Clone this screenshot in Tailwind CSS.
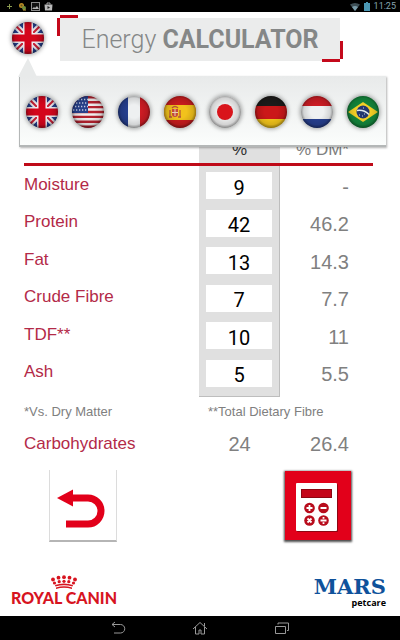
<!DOCTYPE html>
<html lang="en">
<head>
    <meta charset="UTF-8">
    <meta name="viewport" content="width=device-width, initial-scale=1.0">
    <title>Energy Calculator</title>
    <script src="https://cdn.jsdelivr.net/npm/@tailwindcss/browser@4"></script>
</head>
<body class="flex min-h-screen flex-col bg-white font-['Liberation_Sans',sans-serif]">
    <!-- shared flag drawings; size-0 because gradients do not paint from a display:none svg -->
    <svg class="absolute size-0" aria-hidden="true">
        <defs>
            <radialGradient id="shine" cx="50%" cy="48%" r="52%">
                <stop offset="40%" stop-color="#000" stop-opacity="0"/>
                <stop offset="80%" stop-color="#000" stop-opacity=".12"/>
                <stop offset="100%" stop-color="#000" stop-opacity=".45"/>
            </radialGradient>
            <symbol id="uk" viewBox="0 0 32 32">
                <rect width="32" height="32" fill="#26418f"/>
                <path d="M0 0L32 32M32 0L0 32" stroke="#f1eef2" stroke-width="6"/>
                <path d="M0 0L32 32M32 0L0 32" stroke="#cf2036" stroke-width="2"/>
                <path d="M16 0V32M0 16H32" stroke="#f1eef2" stroke-width="10"/>
                <path d="M16 0V32M0 16H32" stroke="#d4061c" stroke-width="7"/>
                <rect width="32" height="32" fill="url(#shine)"/>
            </symbol>
            <symbol id="us" viewBox="0 0 32 32">
                <rect width="32" height="32" fill="#f0eeee"/>
                <path d="M0 1.300H32M0 6.200H32M0 11.100H32M0 16H32M0 20.900H32M0 25.800H32M0 30.700H32" stroke="#b5222f" stroke-width="2.400"/>
                <rect width="16" height="17" fill="#27408b"/>
                <path d="M3 3.500H16M1 7H16M3 10.500H16M1 14H16" stroke="#c5cde6" stroke-width="1.300" stroke-dasharray="1.300 1.700"/>
                <rect width="32" height="32" fill="url(#shine)"/>
            </symbol>
            <symbol id="fr" viewBox="0 0 32 32">
                <rect width="32" height="32" fill="#eef0f1"/>
                <rect width="10" height="32" fill="#263f8f"/>
                <rect x="22" width="10" height="32" fill="#cf1c24"/>
                <rect width="32" height="32" fill="url(#shine)"/>
            </symbol>
            <symbol id="es" viewBox="0 0 32 32">
                <rect width="32" height="32" fill="#c91c1e"/>
                <rect y="9" width="32" height="15" fill="#f2c21c"/>
                <path d="M8 13h6v5q0 3-3 3t-3-3z" fill="#c4483d"/>
                <path d="M6 14v7M16 14v7M5 21h3M14 21h3M8 12q3-3 6 0" fill="none" stroke="#b4533c" stroke-width="1.300"/>
                <path d="M11 13v7M8 16.500h6" stroke="#e9cfb2"/>
                <rect width="32" height="32" fill="url(#shine)"/>
            </symbol>
            <symbol id="jp" viewBox="0 0 32 32">
                <rect width="32" height="32" fill="#efefef"/>
                <circle cx="16" cy="16" r="8" fill="#d9141b"/>
                <rect width="32" height="32" fill="url(#shine)"/>
            </symbol>
            <symbol id="de" viewBox="0 0 32 32">
                <rect width="32" height="11" fill="#1d1b1a"/>
                <rect y="10" width="32" height="13" fill="#cb1719"/>
                <rect y="23" width="32" height="9" fill="#f3c51c"/>
                <rect width="32" height="32" fill="url(#shine)"/>
            </symbol>
            <symbol id="nl" viewBox="0 0 32 32">
                <rect width="32" height="32" fill="#eef0f1"/>
                <rect width="32" height="10" fill="#cb1c24"/>
                <rect y="23" width="32" height="9" fill="#263f8f"/>
                <rect width="32" height="32" fill="url(#shine)"/>
            </symbol>
            <symbol id="br" viewBox="0 0 32 32">
                <rect width="32" height="32" fill="#13873c"/>
                <path d="M1 16L16 6L31 16L16 26z" fill="#f5d126"/>
                <circle cx="16" cy="16" r="6.500" fill="#22366f"/>
                <path d="M10 14.500q7-1 12 4" fill="none" stroke="#dfe7ee" stroke-width="1.500"/>
                <path d="M12 19h1M15 20h1M17 18h1M16 12h1" stroke="#c6d0e4"/>
                <rect width="32" height="32" fill="url(#shine)"/>
            </symbol>
        </defs>
    </svg>

    <!-- status bar -->
    <div class="flex h-3 items-center justify-between bg-black px-1">
        <div class="flex items-center gap-1 pl-px">
            <svg class="size-[9px]" viewBox="0 0 9 9"><path d="M4.500 2v5M2 4.500h5" stroke="#8a9a50"/></svg>
            <svg class="size-[9px]" viewBox="0 0 9 9"><circle cx="3.500" cy="3.500" r="2.500" fill="#b98b25"/><circle cx="6" cy="6" r="2" fill="#6d8f3d"/><circle cx="3.500" cy="3.500" r="1" fill="#5d5520"/><path d="M5 8h3" stroke="#c9a13a"/></svg>
            <svg class="size-[9px]" viewBox="0 0 9 9"><rect x=".5" y=".5" width="8" height="8" fill="#111" stroke="#8b8b8b"/><path d="M1 7l2-2 1 1 2-2 2 3z" fill="#b5b5b5"/></svg>
            <svg class="size-[9px]" viewBox="0 0 9 9"><path d="M3 2.500V1h3v1.500" fill="none" stroke="#aaa"/><path d="M.5 2.500h8l-.5 6H1z" fill="#b9b9b9"/><path d="M3.500 4v3l2.500-1.500z" fill="#222"/></svg>
        </div>
        <div class="flex items-center gap-1">
            <svg class="h-[9px] w-[10px]" viewBox="0 0 10 9"><path d="M0 2.500Q5-.5 10 2.500L5 9z" fill="#3e4f56"/><path d="M2 5q3-2 6 0L5 9z" fill="#7a9ba8"/></svg>
            <svg class="h-[9px] w-[6px]" viewBox="0 0 6 9"><path d="M2 0h2v1h2v8H0V1h2z" fill="#4b97b3"/></svg>
            <span class="font-[Roboto,sans-serif] text-[9px] leading-3 text-[#86a5b0]">11:25</span>
        </div>
    </div>

    <div class="relative flex flex-1 flex-col">
        <header class="flex items-start gap-4 pt-[6px] pr-15 pl-3">
            <button type="button" class="mt-1 size-8 shrink-0 overflow-hidden rounded-full shadow-[0_0_4px_1px_rgba(0,0,0,0.35)]" aria-label="Language: English" aria-expanded="true" onclick="toggleLanguages(this)">
                <svg class="size-8"><use href="#uk"/></svg>
            </button>
            <div class="relative flex h-[43px] flex-1 items-center justify-center bg-[#ebecec]">
                <span class="absolute -top-[3px] left-0 h-[3px] w-[18px] bg-[#c4091b]"></span>
                <span class="absolute top-0 -left-[3px] h-[18px] w-[3px] bg-[#c4091b]"></span>
                <span class="absolute right-0 -bottom-px h-[3px] w-[18px] bg-[#c4091b]"></span>
                <span class="absolute -right-[3px] bottom-[2px] h-[18px] w-[3px] bg-[#c4091b]"></span>
                <h1 class="font-[Roboto,sans-serif] text-[25px] font-light whitespace-nowrap text-[#858787]">Energy <b class="font-bold">CALCULATOR</b></h1>
            </div>
        </header>

        <!-- language popover -->
        <div id="languages" class="absolute top-16 right-[14px] left-[19px]">
            <svg class="absolute -top-[18px] -left-px h-[19px] w-5" viewBox="0 0 20 19"><path d="M10 0L19 19H0z" fill="#e8eaea"/></svg>
            <div class="flex h-[71px] items-center justify-between border-b-2 border-l border-[#b4b7b7] bg-linear-to-b from-[#e8eaea] to-[#fbfdfc] pt-[2px] pr-[7px] pl-[6px] shadow-[1px_1px_2px_rgba(0,0,0,0.3)]">
                <button type="button" class="size-8 overflow-hidden rounded-full shadow-[0_0_4px_1px_rgba(0,0,0,0.35)]" aria-label="English (UK)"><svg class="size-8"><use href="#uk"/></svg></button>
                <button type="button" class="size-8 overflow-hidden rounded-full shadow-[0_0_4px_1px_rgba(0,0,0,0.35)]" aria-label="English (US)"><svg class="size-8"><use href="#us"/></svg></button>
                <button type="button" class="size-8 overflow-hidden rounded-full shadow-[0_0_4px_1px_rgba(0,0,0,0.35)]" aria-label="Français"><svg class="size-8"><use href="#fr"/></svg></button>
                <button type="button" class="size-8 overflow-hidden rounded-full shadow-[0_0_4px_1px_rgba(0,0,0,0.35)]" aria-label="Español"><svg class="size-8"><use href="#es"/></svg></button>
                <button type="button" class="size-8 overflow-hidden rounded-full shadow-[0_0_4px_1px_rgba(0,0,0,0.35)]" aria-label="日本語"><svg class="size-8"><use href="#jp"/></svg></button>
                <button type="button" class="size-8 overflow-hidden rounded-full shadow-[0_0_4px_1px_rgba(0,0,0,0.35)]" aria-label="Deutsch"><svg class="size-8"><use href="#de"/></svg></button>
                <button type="button" class="size-8 overflow-hidden rounded-full shadow-[0_0_4px_1px_rgba(0,0,0,0.35)]" aria-label="Nederlands"><svg class="size-8"><use href="#nl"/></svg></button>
                <button type="button" class="size-8 overflow-hidden rounded-full shadow-[0_0_4px_1px_rgba(0,0,0,0.35)]" aria-label="Português"><svg class="size-8"><use href="#br"/></svg></button>
            </div>
        </div>

        <main class="pt-[72px] pr-[27px] pl-6">
            <table class="w-full table-fixed border-separate border-spacing-0 text-[#808080]">
                <colgroup>
                    <col>
                    <col class="w-[81px]">
                    <col class="w-[93px]">
                </colgroup>
                <thead>
                    <tr class="h-[33px] text-[17px] leading-5">
                        <th class="border-b-3 border-[#bf0a18]"></th>
                        <th class="border-b-3 border-[#bf0a18] bg-[#e0e0e0] pt-1 font-normal text-[#333]">%</th>
                        <th class="border-b-3 border-[#bf0a18] pt-1 pr-6 text-right font-normal whitespace-nowrap">% DM*</th>
                    </tr>
                </thead>
                <tbody class="text-xl leading-6">
                    <tr class="h-[37px]">
                        <th class="text-left text-[17px] font-normal text-[#b32a48]"><label for="moisture">Moisture</label></th>
                        <td class="border-r border-[#bdbdbd] bg-[#e0e0e0] px-[7px] pt-[2px]"><input id="moisture" type="text" inputmode="decimal" value="9" class="block h-[27px] w-full bg-white pt-1 text-center font-[Roboto,sans-serif] text-black"></td>
                        <td class="pt-1 pr-6 text-right">-</td>
                    </tr>
                    <tr class="h-[38px]">
                        <th class="text-left text-[17px] font-normal text-[#b32a48]"><label for="protein">Protein</label></th>
                        <td class="border-r border-[#bdbdbd] bg-[#e0e0e0] px-[7px] pt-[2px]"><input id="protein" type="text" inputmode="decimal" value="42" class="block h-[27px] w-full bg-white pt-1 text-center font-[Roboto,sans-serif] text-black"></td>
                        <td class="pt-1 pr-6 text-right">46.2</td>
                    </tr>
                    <tr class="h-[37px]">
                        <th class="text-left text-[17px] font-normal text-[#b32a48]"><label for="fat">Fat</label></th>
                        <td class="border-r border-[#bdbdbd] bg-[#e0e0e0] px-[7px] pt-[2px]"><input id="fat" type="text" inputmode="decimal" value="13" class="block h-[27px] w-full bg-white pt-1 text-center font-[Roboto,sans-serif] text-black"></td>
                        <td class="pt-1 pr-6 text-right">14.3</td>
                    </tr>
                    <tr class="h-[38px]">
                        <th class="text-left text-[17px] font-normal text-[#b32a48]"><label for="fibre">Crude Fibre</label></th>
                        <td class="border-r border-[#bdbdbd] bg-[#e0e0e0] px-[7px] pt-[2px]"><input id="fibre" type="text" inputmode="decimal" value="7" class="block h-[27px] w-full bg-white pt-1 text-center font-[Roboto,sans-serif] text-black"></td>
                        <td class="pt-1 pr-6 text-right">7.7</td>
                    </tr>
                    <tr class="h-[37px]">
                        <th class="text-left text-[17px] font-normal text-[#b32a48]"><label for="tdf">TDF**</label></th>
                        <td class="border-r border-[#bdbdbd] bg-[#e0e0e0] px-[7px] pt-[2px]"><input id="tdf" type="text" inputmode="decimal" value="10" class="block h-[27px] w-full bg-white pt-1 text-center font-[Roboto,sans-serif] text-black"></td>
                        <td class="pt-1 pr-6 text-right">11</td>
                    </tr>
                    <tr class="h-[38px]">
                        <th class="text-left text-[17px] font-normal text-[#b32a48]"><label for="ash">Ash</label></th>
                        <td class="border-r border-[#bdbdbd] bg-[#e0e0e0] px-[7px] pt-[2px]"><input id="ash" type="text" inputmode="decimal" value="5" class="block h-[27px] w-full bg-white pt-1 text-center font-[Roboto,sans-serif] text-black"></td>
                        <td class="pt-1 pr-6 text-right">5.5</td>
                    </tr>
                </tbody>
                <tfoot class="text-xl leading-6">
                    <tr class="h-[34px] text-[13px] leading-5">
                        <td class="pt-2">*Vs. Dry Matter</td>
                        <!-- closes the grey column -->
                        <td colspan="2" class="relative pt-2 pl-[9px] before:absolute before:top-0 before:left-0 before:h-[6px] before:w-[81px] before:border-r before:border-b before:border-[#bdbdbd] before:bg-[#e0e0e0]">**Total Dietary Fibre</td>
                    </tr>
                    <tr class="h-[37px]">
                        <th class="text-left text-[17px] font-normal text-[#b32a48]">Carbohydrates</th>
                        <td class="text-center">24</td>
                        <td class="pr-6 text-right">26.4</td>
                    </tr>
                </tfoot>
            </table>
        </main>

        <div class="flex justify-between px-[49px] pt-2">
            <button type="button" aria-label="Back" class="border-x border-b-2 border-x-[#dcdcdc] border-b-[#b5b5b5]">
                <svg class="h-[70px] w-[66px]" viewBox="0 0 66 70"><path d="M16 54h22a13 13 0 0 0 0-26H18" fill="none" stroke="#e2001a" stroke-width="7"/><path d="M7 28L23 19.500v17z" fill="#e2001a"/></svg>
            </button>
            <button type="button" aria-label="Calculate" class="mt-px mb-[2px] bg-[#e2001a] shadow-[0_1px_2px_1px_rgba(0,0,0,0.7)]">
                <svg class="h-[68px] w-[66px]" viewBox="0 0 66 68">
                    <rect x="12" y="12" width="41" height="48" rx="1" fill="#8d0612"/>
                    <rect x="11" y="11" width="41" height="48" rx="1" fill="#fff"/>
                    <rect x="16.500" y="17.500" width="30" height="8" fill="#c4061a" stroke="#8d0612"/>
                    <g fill="#b80c1c"><circle cx="24.500" cy="36" r="5.300"/><circle cx="38.500" cy="36" r="5.300"/><circle cx="24.500" cy="48.500" r="5.300"/><circle cx="38.500" cy="48.500" r="5.300"/></g>
                    <path d="M24.500 33v6M21.500 36h6M35.500 36h6M22.500 46.500l4 4M26.500 46.500l-4 4M35.500 48.500h6M38.500 45v1.800M38.500 50.200v1.800" stroke="#fff" stroke-width="1.800"/>
                </svg>
            </button>
        </div>

        <footer class="mt-auto flex items-end justify-between pr-[14px] pb-2 pl-[11px]">
            <div class="flex flex-col items-center pb-[2px] text-[#d7141f]">
                <svg class="h-[15px] w-7" viewBox="0 0 28 15" fill="currentColor">
                    <circle cx="3" cy="4.500" r="1.900"/><circle cx="8.500" cy="2.700" r="1.900"/><circle cx="14" cy="2.200" r="1.900"/><circle cx="19.500" cy="2.700" r="1.900"/><circle cx="25" cy="4.500" r="1.900"/>
                    <circle cx="4.500" cy="8" r="1.600"/><circle cx="9.200" cy="6.700" r="1.600"/><circle cx="14" cy="6.300" r="1.600"/><circle cx="18.800" cy="6.700" r="1.600"/><circle cx="23.500" cy="8" r="1.600"/>
                    <path d="M5 10Q14 7 23 10L22.500 11.500Q14 9 5.500 11.500zM6 12.500Q14 10 22 12.500L22 14Q14 11.500 6 14z"/>
                </svg>
                <span class="font-[Lato,sans-serif] text-[16px] leading-4 font-black whitespace-nowrap">ROYAL CANIN</span>
            </div>
            <div class="flex flex-col items-end">
                <span class="font-['DejaVu_Serif',serif] text-[21px] leading-[22px] font-bold text-[#0f529b]">MARS</span>
                <span class="font-['Open_Sans',sans-serif] text-[9px] leading-[10px] font-bold text-black">petcare</span>
            </div>
        </footer>
    </div>

    <!-- system navigation -->
    <nav class="flex h-6 items-center justify-center gap-[66px] bg-black">
        <button type="button" aria-label="System back"><svg class="h-[14px] w-4" viewBox="0 0 16 14" fill="none" stroke="#999"><path d="M2 3.500h8.500a4 4 0 0 1 0 8.500H4M5 1L2 3.500L5 6"/></svg></button>
        <button type="button" aria-label="Home"><svg class="h-[14px] w-4" viewBox="0 0 16 14" fill="none" stroke="#999"><path d="M1 8L8 1.500L15 8M3.500 6v7h3.500V9h2v4h3.500V6M12.500 5V2"/></svg></button>
        <button type="button" aria-label="Recent apps"><svg class="h-[14px] w-4" viewBox="0 0 16 14" fill="none" stroke="#999"><path d="M1.500 5.500h10v7h-10zM4 3.500V2h10.500v7.500H13"/></svg></button>
    </nav>

    <script>
        function toggleLanguages(button) {
            const hidden = document.getElementById('languages').classList.toggle('hidden');
            button.setAttribute('aria-expanded', String(!hidden));
        }
    </script>
</body>
</html>
